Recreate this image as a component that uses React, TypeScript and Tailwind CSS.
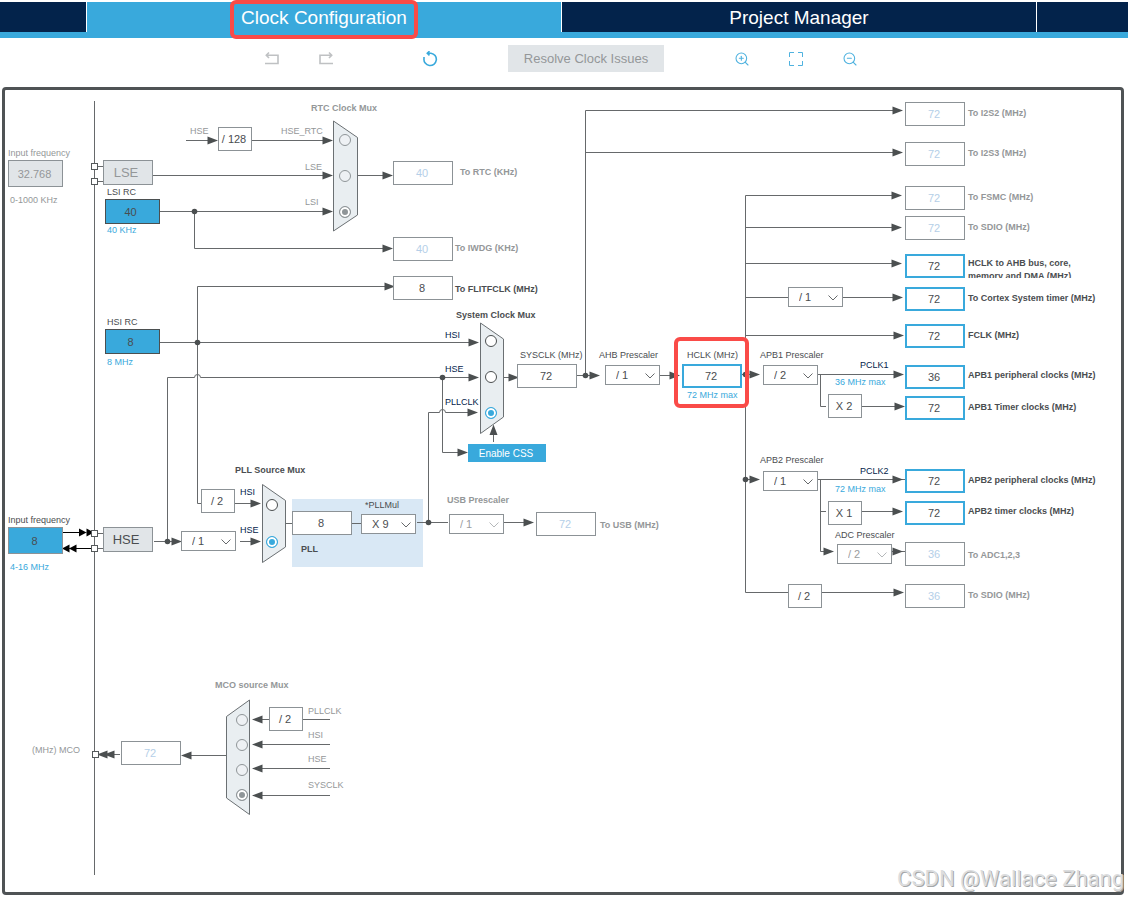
import { useState } from 'react';
import clsx from 'clsx';
import { ZoomIn, ZoomOut } from 'lucide-react';

type Tone = 'dark' | 'muted' | 'blue' | 'navy';

interface Label {
  x: number;
  y: number;
  text: string;
  tone: Tone;
  bold?: boolean;
  target?: string;
}

interface Field {
  id: string;
  x: number;
  y: number;
  value: string;
  kind: 'normal' | 'off' | 'active';
}

interface Prescaler {
  id: string;
  x: number;
  y: number;
  options: string[];
  name?: string;
  off?: boolean;
}

interface Mux {
  id: string;
  name: string;
  shape: string;
  off?: boolean;
  selected: string;
  inputs: { name: string; x: number; y: number }[];
}

// The visible part of the clock sheet starts here, in sheet coordinates.
const ORIGIN = { x: 5, y: 90 };

const at = (x: number, y: number) => ({ left: x - ORIGIN.x, top: y - ORIGIN.y });

const toneClass: Record<Tone, string> = {
  dark: 'text-[#4a4d50]',
  muted: 'text-[#949799]',
  blue: 'text-[#39a9dc]',
  navy: 'text-[#03234b]',
};

// y is the middle of the line of text
const labels: Label[] = [
  { x: 8, y: 153, text: 'Input frequency', tone: 'muted', target: 'lse-in' },
  { x: 10, y: 200, text: '0-1000 KHz', tone: 'muted' },
  { x: 107, y: 192, text: 'LSI RC', tone: 'dark', target: 'lsi' },
  { x: 107, y: 230, text: '40 KHz', tone: 'blue' },
  { x: 107, y: 322, text: 'HSI RC', tone: 'dark', target: 'hsi' },
  { x: 107, y: 362, text: '8 MHz', tone: 'blue' },
  { x: 8, y: 520, text: 'Input frequency', tone: 'dark', target: 'hse-in' },
  { x: 10, y: 567, text: '4-16 MHz', tone: 'blue' },

  { x: 311, y: 108, text: 'RTC Clock Mux', tone: 'muted', bold: true },
  { x: 190, y: 131, text: 'HSE', tone: 'muted' },
  { x: 281, y: 131, text: 'HSE_RTC', tone: 'muted', target: 'rtc-HSE_RTC' },
  { x: 305, y: 167, text: 'LSE', tone: 'muted', target: 'rtc-LSE' },
  { x: 305, y: 202, text: 'LSI', tone: 'muted', target: 'rtc-LSI' },
  { x: 460, y: 172, text: 'To RTC (KHz)', tone: 'muted', bold: true, target: 'rtc-out' },
  { x: 455, y: 248, text: 'To IWDG (KHz)', tone: 'muted', bold: true, target: 'iwdg' },
  { x: 455, y: 289, text: 'To FLITFCLK (MHz)', tone: 'dark', bold: true, target: 'flitf' },

  { x: 456, y: 315, text: 'System Clock Mux', tone: 'dark', bold: true },
  { x: 445, y: 335, text: 'HSI', tone: 'navy', target: 'sys-HSI' },
  { x: 445, y: 369, text: 'HSE', tone: 'navy', target: 'sys-HSE' },
  { x: 445, y: 402, text: 'PLLCLK', tone: 'navy', target: 'sys-PLLCLK' },
  { x: 520, y: 355, text: 'SYSCLK (MHz)', tone: 'dark', target: 'sysclk' },
  { x: 599, y: 355, text: 'AHB Prescaler', tone: 'dark', target: 'ahb' },
  { x: 687, y: 355, text: 'HCLK (MHz)', tone: 'dark', target: 'hclk' },
  { x: 687, y: 395, text: '72 MHz max', tone: 'blue' },

  { x: 235, y: 470, text: 'PLL Source Mux', tone: 'dark', bold: true },
  { x: 240, y: 492, text: 'HSI', tone: 'navy', target: 'pll-HSI' },
  { x: 240, y: 530, text: 'HSE', tone: 'navy', target: 'pll-HSE' },
  { x: 365, y: 505, text: '*PLLMul', tone: 'dark', target: 'pllmul' },
  { x: 301, y: 549, text: 'PLL', tone: 'dark', bold: true, target: 'pll-vco' },
  { x: 447, y: 500, text: 'USB Prescaler', tone: 'muted', bold: true, target: 'usb-pre' },
  { x: 600, y: 525, text: 'To USB (MHz)', tone: 'muted', bold: true, target: 'usb' },

  { x: 760, y: 355, text: 'APB1 Prescaler', tone: 'dark', target: 'apb1-pre' },
  { x: 860, y: 365, text: 'PCLK1', tone: 'navy' },
  { x: 835, y: 382, text: '36 MHz max', tone: 'blue' },
  { x: 760, y: 460, text: 'APB2 Prescaler', tone: 'dark', target: 'apb2-pre' },
  { x: 860, y: 471, text: 'PCLK2', tone: 'navy' },
  { x: 835, y: 489, text: '72 MHz max', tone: 'blue' },
  { x: 835, y: 535, text: 'ADC Prescaler', tone: 'dark', target: 'adc-pre' },

  { x: 968, y: 113, text: 'To I2S2 (MHz)', tone: 'muted', bold: true, target: 'i2s2' },
  { x: 968, y: 153, text: 'To I2S3 (MHz)', tone: 'muted', bold: true, target: 'i2s3' },
  { x: 968, y: 197, text: 'To FSMC (MHz)', tone: 'muted', bold: true, target: 'fsmc' },
  { x: 968, y: 227, text: 'To SDIO (MHz)', tone: 'muted', bold: true, target: 'sdio' },
  { x: 968, y: 298, text: 'To Cortex System timer (MHz)', tone: 'dark', bold: true, target: 'cortex' },
  { x: 968, y: 335, text: 'FCLK (MHz)', tone: 'dark', bold: true, target: 'fclk' },
  { x: 968, y: 375, text: 'APB1 peripheral clocks (MHz)', tone: 'dark', bold: true, target: 'apb1' },
  { x: 968, y: 407, text: 'APB1 Timer clocks (MHz)', tone: 'dark', bold: true, target: 'apb1-tim' },
  { x: 968, y: 480, text: 'APB2 peripheral clocks (MHz)', tone: 'dark', bold: true, target: 'apb2' },
  { x: 968, y: 511, text: 'APB2 timer clocks (MHz)', tone: 'dark', bold: true, target: 'apb2-tim' },
  { x: 968, y: 555, text: 'To ADC1,2,3', tone: 'muted', bold: true, target: 'adc' },
  { x: 968, y: 595, text: 'To SDIO (MHz)', tone: 'muted', bold: true, target: 'sdio-2' },

  { x: 215, y: 685, text: 'MCO source Mux', tone: 'muted', bold: true },
  { x: 308, y: 711, text: 'PLLCLK', tone: 'muted', target: 'mco-PLLCLK' },
  { x: 308, y: 735, text: 'HSI', tone: 'muted', target: 'mco-HSI' },
  { x: 308, y: 759, text: 'HSE', tone: 'muted', target: 'mco-HSE' },
  { x: 308, y: 785, text: 'SYSCLK', tone: 'muted', target: 'mco-SYSCLK' },
  { x: 32, y: 750, text: '(MHz) MCO', tone: 'muted', target: 'mco-out' },
];

const fields: Field[] = [
  { id: 'rtc-out', x: 393, y: 161, value: '40', kind: 'off' },
  { id: 'iwdg', x: 393, y: 237, value: '40', kind: 'off' },
  { id: 'flitf', x: 393, y: 276, value: '8', kind: 'normal' },
  { id: 'sysclk', x: 517, y: 364, value: '72', kind: 'normal' },
  { id: 'hclk', x: 682, y: 364, value: '72', kind: 'active' },
  { id: 'pll-vco', x: 292, y: 511, value: '8', kind: 'normal' },
  { id: 'usb', x: 536, y: 512, value: '72', kind: 'off' },
  { id: 'mco-out', x: 121, y: 741, value: '72', kind: 'off' },
  { id: 'i2s2', x: 905, y: 102, value: '72', kind: 'off' },
  { id: 'i2s3', x: 905, y: 142, value: '72', kind: 'off' },
  { id: 'fsmc', x: 905, y: 186, value: '72', kind: 'off' },
  { id: 'sdio', x: 905, y: 216, value: '72', kind: 'off' },
  { id: 'ahb-bus', x: 905, y: 254, value: '72', kind: 'active' },
  { id: 'cortex', x: 905, y: 287, value: '72', kind: 'active' },
  { id: 'fclk', x: 905, y: 324, value: '72', kind: 'active' },
  { id: 'apb1', x: 905, y: 365, value: '36', kind: 'active' },
  { id: 'apb1-tim', x: 905, y: 396, value: '72', kind: 'active' },
  { id: 'apb2', x: 905, y: 469, value: '72', kind: 'active' },
  { id: 'apb2-tim', x: 905, y: 501, value: '72', kind: 'active' },
  { id: 'adc', x: 905, y: 542, value: '36', kind: 'off' },
  { id: 'sdio-2', x: 905, y: 584, value: '36', kind: 'off' },
];

const fixedFactors = [
  { x: 218, y: 127, text: '/ 128' },
  { x: 201, y: 489, text: '/ 2' },
  { x: 828, y: 394, text: 'X 2' },
  { x: 828, y: 501, text: 'X 1' },
  { x: 788, y: 584, text: '/ 2' },
  { x: 269, y: 707, text: '/ 2' },
];

const prescalers: Prescaler[] = [
  { id: 'hse-pre', x: 181, y: 531, options: ['/ 1', '/ 2'], name: 'HSE divider' },
  { id: 'pllmul', x: 361, y: 514, options: ['X 9', 'X 8', 'X 6', 'X 4'] },
  { id: 'usb-pre', x: 449, y: 514, options: ['/ 1', '/ 1.5'], off: true },
  { id: 'ahb', x: 605, y: 365, options: ['/ 1', '/ 2', '/ 4', '/ 8'] },
  { id: 'cortex-pre', x: 788, y: 287, options: ['/ 1', '/ 8'], name: 'Cortex divider' },
  { id: 'apb1-pre', x: 763, y: 365, options: ['/ 2', '/ 1', '/ 4', '/ 8'] },
  { id: 'apb2-pre', x: 763, y: 471, options: ['/ 1', '/ 2', '/ 4', '/ 8'] },
  { id: 'adc-pre', x: 837, y: 544, options: ['/ 2', '/ 4', '/ 6'], off: true },
];

const muxes: Mux[] = [
  {
    id: 'rtc',
    name: 'RTC Clock Mux',
    shape: '333.5,121 357.5,137.5 357.5,215 333.5,231',
    off: true,
    selected: 'LSI',
    inputs: [
      { name: 'HSE_RTC', x: 345, y: 140 },
      { name: 'LSE', x: 345, y: 176 },
      { name: 'LSI', x: 345, y: 212 },
    ],
  },
  {
    id: 'sys',
    name: 'System Clock Mux',
    shape: '480.5,323 503.5,339 503.5,417 480.5,433.5',
    selected: 'PLLCLK',
    inputs: [
      { name: 'HSI', x: 491, y: 341 },
      { name: 'HSE', x: 491, y: 377 },
      { name: 'PLLCLK', x: 491, y: 413 },
    ],
  },
  {
    id: 'pll',
    name: 'PLL Source Mux',
    shape: '262.5,484.5 285.5,500.5 285.5,547 262.5,562.5',
    selected: 'HSE',
    inputs: [
      { name: 'HSI', x: 272, y: 505 },
      { name: 'HSE', x: 272, y: 542 },
    ],
  },
  {
    id: 'mco',
    name: 'MCO source Mux',
    shape: '249.5,700 226.5,716.5 226.5,798 249.5,814.5',
    off: true,
    selected: 'SYSCLK',
    inputs: [
      { name: 'PLLCLK', x: 242, y: 720 },
      { name: 'HSI', x: 242, y: 745 },
      { name: 'HSE', x: 242, y: 770 },
      { name: 'SYSCLK', x: 242, y: 795 },
    ],
  },
];

const wires = [
  // chip edge and pins
  'M94.5 101V875',
  'M94 166.5H103M94 181.5H103',
  'M94 533.5H103M94 548.5H103',
  'M105 754.5H120',
  // RTC and IWDG
  'M186 140.5H210M252 140.5H325',
  'M153 175.5H325M357 175.5H385',
  'M160 211.5H325M194.5 211.5V248.5H385',
  // HSI
  'M160 342.5H471M197.5 342.5V286.5H386M197.5 342.5V503.5H201M235 503.5H254',
  // HSE, hopping over the HSI line
  'M154 541.5H174M240 541.5H254M167.5 541.5V377.5H194.5A3 3 0 0 1 200.5 377.5H471',
  'M442.5 377.5V452.5H460',
  // PLL
  'M286 523.5H292M352 523.5H361M417 522.5H448M504 522.5H526',
  'M428.5 522.5V412.5H439.5A3 3 0 0 1 445.5 412.5H471',
  'M493.5 442V432',
  // SYSCLK
  'M503 377.5H512M577 375.5H592M660 375.5H672',
  'M585.5 375.5V110.5H895M585.5 152.5H895',
  // HCLK
  'M742 374.5H752M745.5 592.5V195.5H894M745.5 227.5H894M745.5 263.5H894',
  'M745.5 297.5H788M843 297.5H895M745.5 335.5H895M745.5 479.5H752M745.5 592.5H788M822 592.5H895',
  // APB1 and APB2
  'M818 374.5H895M820.5 374.5V406.5H826M862 406.5H896',
  'M818 479.5H905M820.5 479.5V551.5H826M820.5 511.5H826M862 511.5H895M892 551.5H905',
  // MCO
  'M330 719.5H303M269 719.5H260M330 744.5H260M330 768.5H260M330 795.5H260M226 755.5H190',
];

// tips of the arrow heads
const arrowsRight = [
  [218, 140], [333, 140], [333, 175], [393, 175], [333, 211], [393, 248], [395, 286],
  [479, 342], [479, 377], [478, 412], [519, 377], [468, 452], [261, 503], [261, 541],
  [182, 541], [534, 522], [600, 375], [680, 375], [760, 374], [760, 479],
  [903, 110], [903, 152], [902, 195], [902, 227], [902, 263], [903, 297], [904, 335],
  [904, 374], [905, 406], [903, 479], [903, 511], [834, 551], [903, 551], [904, 592],
];

const arrowsLeft = [
  [252, 719], [252, 744], [252, 768], [252, 795], [181, 755], [97, 754], [104, 754],
];

const junctions = [
  [194, 211], [197, 342], [442, 377], [167, 541], [428, 522], [585, 375], [745, 374], [745, 479],
];

const pins = [
  [91, 163], [91, 178], [91, 530], [91, 545], [92, 751],
];

function Wiring() {
  return (
    <svg
      className="absolute left-0 top-0"
      width={1116}
      height={802}
      viewBox={`${ORIGIN.x} ${ORIGIN.y} 1116 802`}
      aria-hidden="true"
    >
      <rect x={292} y={499} width={131} height={68} fill="#d9e8f5" />
      <g fill="none" stroke="#66696b">
        {wires.map((d) => (
          <path key={d} d={d} />
        ))}
      </g>
      <g fill="#4b4f50">
        {arrowsRight.map(([x, y]) => (
          <path key={`r${x}-${y}`} d={`M${x} ${y + 0.5}l-10.5 -4v8z`} />
        ))}
        {arrowsLeft.map(([x, y]) => (
          <path key={`l${x}-${y}`} d={`M${x} ${y + 0.5}l10.5 -4v8z`} />
        ))}
        {junctions.map(([x, y]) => (
          <circle key={`j${x}-${y}`} cx={x + 0.5} cy={y + 0.5} r={2.8} />
        ))}
        <path d="M493.5 424.500l-4 10.500h8z" />
      </g>
      {/* oscillator signals between the crystal and the chip */}
      <g fill="#000" stroke="none">
        <path d="M63 532h17v1h-17zM72 548h20v1h-20z" />
        <path d="M86.500 532.500l-7.500 -4v8zM94 532.500l-7.500 -4v8z" />
        <path d="M62 548.500l7.500 -4v8zM69 548.500l7.500 -4v8z" />
      </g>
      <g fill="#fff" stroke="#55595b">
        {pins.map(([x, y]) => (
          <rect key={`p${x}-${y}`} x={x + 0.5} y={y + 0.5} width={6} height={6} />
        ))}
      </g>
      <g fill="#e9eef1" stroke="#6b7073">
        {muxes.map((m) => (
          <polygon key={m.id} points={m.shape} />
        ))}
      </g>
    </svg>
  );
}

function MuxInputs({ mux }: { mux: Mux }) {
  const [selected, setSelected] = useState(mux.selected);

  return (
    <div role="radiogroup" aria-label={mux.name}>
      {mux.inputs.map((input) => (
        <input
          key={input.name}
          id={`${mux.id}-${input.name}`}
          type="radio"
          name={mux.id}
          disabled={mux.off}
          checked={selected === input.name}
          onChange={() => setSelected(input.name)}
          style={at(input.x - 6, input.y - 6)}
          className={clsx(
            'absolute size-3 appearance-none rounded-full border checked:shadow-[inset_0_0_0_2px_#ffffff]',
            mux.off
              ? 'border-[#8f9598] bg-[#eef1f4] checked:bg-[#8f9598]'
              : 'border-[#4b4f50] bg-white checked:border-[#39a9dc] checked:bg-[#39a9dc]'
          )}
        />
      ))}
    </div>
  );
}

function PrescalerSelect({ item }: { item: Prescaler }) {
  return (
    <div className="absolute h-5 w-[55px]" style={at(item.x, item.y)}>
      <select
        id={item.id}
        aria-label={item.name}
        disabled={item.off}
        className={clsx(
          'block h-5 w-full appearance-none border border-[#8c9296] bg-white pl-[10px] text-[11px] leading-4 opacity-100',
          item.off ? 'text-[#9a9da0]' : 'text-[#4a4d50]'
        )}
      >
        {item.options.map((o) => (
          <option key={o}>{o}</option>
        ))}
      </select>
      <svg
        className="pointer-events-none absolute right-1 top-2"
        width="12"
        height="6"
        fill="none"
        stroke={item.off ? '#b5b8ba' : '#66696b'}
        aria-hidden="true"
      >
        <path d="M1.500 .5L6 5L10.500 .5" />
      </svg>
    </div>
  );
}

function Toolbar() {
  return (
    <div className="flex h-[49px] items-center justify-center pb-2 pr-[6px]">
      <div className="flex gap-[38px] text-[#bfc1c3]">
        <button type="button" aria-label="Undo" disabled>
          <svg width="16" height="16" fill="none" stroke="currentColor" strokeWidth="1.600">
            <path d="M2.500 4.200H14V12.500H1M5 1.500L2.300 4.200L5 7" />
          </svg>
        </button>
        <button type="button" aria-label="Redo" disabled>
          <svg width="16" height="16" fill="none" stroke="currentColor" strokeWidth="1.600">
            <path d="M13.500 4.200H2V12.500H15M11 1.500L13.700 4.200L11 7" />
          </svg>
        </button>
      </div>
      <button type="button" aria-label="Reset" className="ml-[88px] mr-[70px] text-[#39a9dc]">
        <svg width="16" height="16" fill="none" stroke="currentColor" strokeWidth="1.600">
          <path d="M5.500 2.200H9A6.200 6.200 0 1 1 2 7.500V6M7.500 .2L5.300 2.200L7.500 4.300" />
        </svg>
      </button>
      <button type="button" disabled className="h-[27px] w-[156px] bg-[#e1e5e8] text-[13px] text-[#949799]">
        Resolve Clock Issues
      </button>
      <div className="ml-[70px] flex gap-[38px] text-[#4fb2df]">
        <button type="button" aria-label="Zoom in">
          <ZoomIn size={16} strokeWidth={1.6} />
        </button>
        <button type="button" aria-label="Fit to window">
          <svg width="16" height="16" fill="none" stroke="currentColor">
            <path d="M1.500 6V1.500H6M10 1.500H14.500V6M14.500 10V14.500H10M6 14.500H1.500V10" />
          </svg>
        </button>
        <button type="button" aria-label="Zoom out">
          <ZoomOut size={16} strokeWidth={1.6} />
        </button>
      </div>
    </div>
  );
}

export default function App() {
  return (
    <div className="relative overflow-hidden bg-white pb-1 pt-0.5 font-['Liberation_Sans',Arial,sans-serif]">
      <nav className="flex h-9 gap-px border-b-[6px] border-[#39a9dc] text-[19px] text-white">
        <div className="w-[86px] bg-[#03234b]" />
        <a href="#clock" className="relative flex flex-1 items-center justify-center bg-[#39a9dc] pt-0.5">
          Clock Configuration
          <span className="absolute -top-[2px] left-1/2 h-[39px] w-[188px] -translate-x-1/2 rounded-md border-4 border-[#fa4b48]" />
        </a>
        <a href="#project" className="flex flex-1 items-center justify-center bg-[#03234b] pt-0.5">
          Project Manager
        </a>
        <div className="w-[91px] bg-[#03234b]" />
      </nav>

      <Toolbar />

      <main className="ml-0.5 mr-1 overflow-hidden rounded-sm border-[3px] border-[#4f5355]">
        <div className="relative h-[802px]">
          <Wiring />

          {labels.map((l) => {
            const Tag = l.target ? 'label' : 'span';
            return (
              <Tag
                key={`${l.text}-${l.x}-${l.y}`}
                htmlFor={l.target}
                style={at(l.x, l.y - 6)}
                className={clsx(
                  'absolute whitespace-nowrap text-[9px] leading-3',
                  toneClass[l.tone],
                  l.bold && 'font-bold'
                )}
              >
                {l.text}
              </Tag>
            );
          })}
          {/* two lines in a one-line slot, the second is partly hidden */}
          <label
            htmlFor="ahb-bus"
            style={at(968, 257)}
            className="absolute h-[21px] w-[130px] overflow-hidden text-[9px] font-bold leading-[13px] text-[#4a4d50]"
          >
            HCLK to AHB bus, core,
            <br />
            memory and DMA (MHz)
          </label>

          <input
            id="lse-in"
            defaultValue="32.768"
            disabled
            style={at(8, 160)}
            className="absolute h-[27px] w-[55px] border border-[#8c9296] bg-[#e1e5e8] pr-[2px] text-center text-[11px] text-[#949799]"
          />
          <input
            id="hse-in"
            defaultValue="8"
            style={at(8, 527)}
            className="absolute h-[27px] w-[55px] border border-[#8c9296] bg-[#39a9dc] pr-[2px] text-center text-[11px] text-[#4a4d50]"
          />
          <button
            type="button"
            disabled
            style={at(103, 160)}
            className="absolute h-[25px] w-[50px] border border-[#8c9296] bg-[#e1e5e8] pr-1 text-[13px] text-[#949799]"
          >
            LSE
          </button>
          <button
            type="button"
            style={at(103, 527)}
            className="absolute h-[25px] w-[50px] border border-[#8c9296] bg-[#e1e5e8] pr-1 text-[13px] text-[#4a4d50]"
          >
            HSE
          </button>
          <input
            id="lsi"
            readOnly
            value="40"
            style={at(105, 199)}
            className="absolute h-[25px] w-[55px] border border-[#4b4f50] bg-[#39a9dc] pr-1 text-center text-[11px] text-[#4a4d50]"
          />
          <input
            id="hsi"
            readOnly
            value="8"
            style={at(105, 329)}
            className="absolute h-[25px] w-[55px] border border-[#4b4f50] bg-[#39a9dc] pr-1 text-center text-[11px] text-[#4a4d50]"
          />

          {fields.map((f) => (
            <input
              key={f.id}
              id={f.id}
              defaultValue={f.value}
              disabled={f.kind === 'off'}
              style={at(f.x, f.y)}
              className={clsx(
                'absolute h-6 w-[60px] bg-white pr-[2px] text-center text-[11px]',
                f.kind === 'active' ? 'border-2 border-[#39a9dc]' : 'border border-[#8c9296]',
                f.kind === 'off' ? 'text-[#b5cfe8]' : 'text-[#4a4d50]'
              )}
            />
          ))}

          {fixedFactors.map((f) => (
            <div
              key={`${f.x}-${f.y}`}
              style={at(f.x, f.y)}
              className="absolute flex h-6 w-[34px] items-center justify-center border border-[#8c9296] bg-white pr-[2px] text-[11px] text-[#4a4d50]"
            >
              {f.text}
            </div>
          ))}

          {prescalers.map((p) => (
            <PrescalerSelect key={p.id} item={p} />
          ))}

          {muxes.map((m) => (
            <MuxInputs key={m.id} mux={m} />
          ))}

          <button
            type="button"
            style={at(468, 444)}
            className="absolute h-[18px] w-[78px] bg-[#39a9dc] pr-[2px] text-[10px] text-white"
          >
            Enable CSS
          </button>

          <span
            style={at(674, 337)}
            className="pointer-events-none absolute h-[71px] w-[75px] rounded-md border-4 border-[#fa4b48]"
          />
        </div>
      </main>

      <p className="absolute bottom-[6px] right-1 whitespace-nowrap font-['Roboto',sans-serif] text-[22px] leading-7 text-[#dcddde] [text-shadow:1px_1px_0_#a5a7a8]">
        CSDN @Wallace Zhang
      </p>
    </div>
  );
}
